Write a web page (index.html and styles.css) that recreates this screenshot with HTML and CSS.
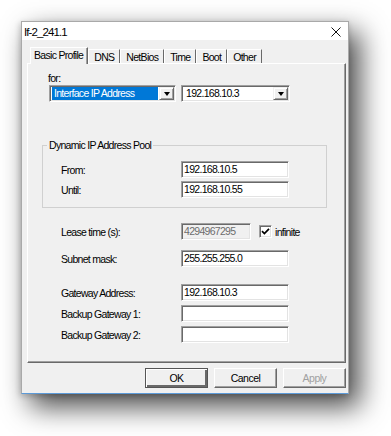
FILE: index.html
```html
<!DOCTYPE html>
<html lang="en">
<head>
    <meta charset="UTF-8">
    <meta name="viewport" content="width=device-width, initial-scale=1.0">
    <title>If-2_241.1</title>
    <link rel="stylesheet" href="styles.css">
</head>
<body>
    <div class="dialog">
        <div class="titlebar">
            <span class="title">If-2_241.1</span>
            <svg class="close" width="10" height="10" viewBox="0 0 10 10">
                <path d="M0.5 0.5 L9.5 9.5 M9.5 0.5 L0.5 9.5" />
            </svg>
        </div>
        <div class="client">
            <div class="tabs">
                <div class="tab active">Basic Profile</div>
                <div class="tab">DNS</div>
                <div class="tab">NetBios</div>
                <div class="tab">Time</div>
                <div class="tab">Boot</div>
                <div class="tab">Other</div>
            </div>
            <div class="panel">
                <div class="caption">for:</div>
                <div class="combo-row">
                    <div class="combo combo-wide">
                        <span class="combo-text selected">Interface IP Address</span>
                        <span class="combo-btn"><span class="arrow"></span></span>
                    </div>
                    <div class="combo">
                        <span class="combo-text">192.168.10.3</span>
                        <span class="combo-btn"><span class="arrow"></span></span>
                    </div>
                </div>

                <fieldset class="group">
                    <legend>Dynamic IP Address Pool</legend>
                    <div class="row row-first">
                        <span class="label">From:</span>
                        <div class="edit">192.168.10.5</div>
                    </div>
                    <div class="row row-tight">
                        <span class="label">Until:</span>
                        <div class="edit">192.168.10.55</div>
                    </div>
                </fieldset>

                <div class="row row-lease">
                    <span class="label">Lease time (s):</span>
                    <div class="edit edit-short disabled">4294967295</div>
                    <span class="check">
                        <svg width="9" height="9" viewBox="0 0 9 9">
                            <path d="M1 4.2 L3.4 6.6 L8 1.8" />
                        </svg>
                    </span>
                    <span class="check-label">infinite</span>
                </div>
                <div class="row row-subnet">
                    <span class="label">Subnet mask:</span>
                    <div class="edit">255.255.255.0</div>
                </div>
                <div class="row row-gateway">
                    <span class="label">Gateway Address:</span>
                    <div class="edit">192.168.10.3</div>
                </div>
                <div class="row row-tight">
                    <span class="label">Backup Gateway 1:</span>
                    <div class="edit"></div>
                </div>
                <div class="row row-tight">
                    <span class="label">Backup Gateway 2:</span>
                    <div class="edit"></div>
                </div>
            </div>
            <div class="buttons">
                <button class="btn default">OK</button>
                <button class="btn">Cancel</button>
                <button class="btn" disabled>Apply</button>
            </div>
        </div>
    </div>
</body>
</html>
```

FILE: styles.css
```css
body {
    margin: 0;
    min-height: 100vh;
    padding: 21px 0 0 21px;
    box-sizing: border-box;
    background: #fff;
    font-family: "Liberation Sans", Arial, sans-serif;
    font-size: 10.5px;
    letter-spacing: -0.7px;
    color: #000;
}
.dialog {
    width: 328px;
    height: 373px;
    box-sizing: border-box;
    border: 1px solid #a9a9a9;
    border-bottom-color: #5c9ad8;
    background: #f0f0f0;
    box-shadow: 10px 12px 26px 1px rgba(0, 0, 0, 0.7), -1px 2px 6px rgba(0, 0, 0, 0.2);
}
.titlebar {
    height: 18px;
    background: #fff;
    display: flex;
    align-items: center;
    justify-content: space-between;
    padding: 0 7px 0 2px;
}
.title {
    font-size: 11.5px;
    letter-spacing: -0.9px;
    padding-top: 1px;
}
.close {
    margin-top: 1px;
}
.close path {
    stroke: #111;
    stroke-width: 1;
    fill: none;
}
.client {
    padding: 7px 2px 0 5px;
}

/* tab strip */
.tabs {
    display: flex;
    align-items: flex-end;
    margin-left: 3px;
    height: 16px;
    position: relative;
    z-index: 1;
}
.tab {
    height: 14px;
    line-height: 14px;
    padding: 0 5px;
    box-sizing: border-box;
    border-top: 1px solid #fff;
    border-left: 1px solid #fff;
    border-right: 1px solid #696969;
    white-space: nowrap;
}
.tab.active {
    height: 17px;
    line-height: 15px;
    margin-bottom: -1px;
    padding: 0 4px 0 3px;
    background: #f0f0f0;
    box-shadow: inset -1px 0 #a0a0a0;
}

.panel {
    height: 300px;
    box-sizing: border-box;
    border-top: 1px solid #fff;
    border-left: 1px solid #fff;
    border-right: 1px solid #696969;
    border-bottom: 1px solid #696969;
    box-shadow: inset -1px -1px #a0a0a0;
    padding: 8px 0 0 14px;
}
.caption {
    height: 12px;
    line-height: 12px;
    margin: 0 0 1px 6px;
}

/* combo boxes */
.combo-row {
    display: flex;
    gap: 5px;
    margin-left: 7px;
}
.combo {
    width: 109px;
    height: 17px;
    box-sizing: border-box;
    display: flex;
    background: #fff;
    border: 1px solid;
    border-color: #a0a0a0 #fff #fff #a0a0a0;
    box-shadow: inset 1px 1px #696969, inset -1px -1px #e3e3e3;
    padding: 1px;
}
.combo-wide {
    width: 127px;
}
.combo-text {
    flex: 1;
    line-height: 13px;
    padding-left: 2px;
    margin: 0 1px;
    white-space: nowrap;
    overflow: hidden;
}
.combo-text.selected {
    background: #0078d7;
    color: #fff;
}
.combo-btn {
    width: 15px;
    box-sizing: border-box;
    background: #f0f0f0;
    border: 1px solid;
    border-color: #f0f0f0 #696969 #696969 #f0f0f0;
    box-shadow: inset 1px 1px #fff, inset -1px -1px #a0a0a0;
    display: flex;
    align-items: center;
    justify-content: center;
}
.arrow {
    width: 0;
    height: 0;
    border-left: 3.5px solid transparent;
    border-right: 3.5px solid transparent;
    border-top: 4px solid #000;
    margin-top: 1px;
}

/* group box */
.group {
    margin: 37px 0 0 0;
    padding: 0 0 9px 0;
    width: 285px;
    box-sizing: border-box;
    border: 1px solid #d0d0d0;
}
.group legend {
    margin-left: 4px;
    padding: 0 2px;
    line-height: 12px;
}

/* label + edit rows */
.row {
    display: flex;
    align-items: center;
    height: 17px;
    margin-left: 19px;
}
.group .row {
    margin-left: 18px;
}
.row-first {
    margin-top: 10px;
}
.row-tight {
    margin-top: 4px;
}
.group .row-tight {
    margin-top: 3px;
}
.row-lease {
    margin-top: 15px;
}
.row-subnet {
    margin-top: 10px;
}
.row-gateway {
    margin-top: 17px;
}
.label {
    width: 120px;
    white-space: nowrap;
}
.edit {
    width: 108px;
    height: 17px;
    box-sizing: border-box;
    background: #fff;
    border: 1px solid;
    border-color: #a0a0a0 #fff #fff #a0a0a0;
    box-shadow: inset 1px 1px #696969, inset -1px -1px #e3e3e3;
    padding: 0 0 0 2px;
    line-height: 15px;
    white-space: nowrap;
}
.edit-short {
    width: 70px;
}
.edit.disabled {
    background: #f0f0f0;
    color: #6d6d6d;
}
.check {
    width: 13px;
    height: 13px;
    box-sizing: border-box;
    margin-left: 8px;
    background: #fff;
    border: 1px solid;
    border-color: #a0a0a0 #fff #fff #a0a0a0;
    box-shadow: inset 1px 1px #696969, inset -1px -1px #e3e3e3;
    display: flex;
    align-items: center;
    justify-content: center;
}
.check path {
    stroke: #000;
    stroke-width: 1.7;
    fill: none;
}
.check-label {
    margin-left: 3px;
}

/* dialog buttons */
.buttons {
    display: flex;
    justify-content: flex-end;
    gap: 6px;
    margin-top: 5px;
}
.btn {
    width: 63px;
    height: 20px;
    box-sizing: border-box;
    padding: 0;
    font-family: inherit;
    font-size: 10.5px;
    letter-spacing: -0.5px;
    color: #000;
    background: #f0f0f0;
    border: 1px solid;
    border-color: #fff #696969 #696969 #fff;
    box-shadow: inset -1px -1px #a0a0a0;
}
.btn.default {
    border-color: #555;
    box-shadow: inset 1px 1px #fff, inset -2px -2px #696969;
}
.btn:disabled {
    color: #a0a0a0;
}
```
